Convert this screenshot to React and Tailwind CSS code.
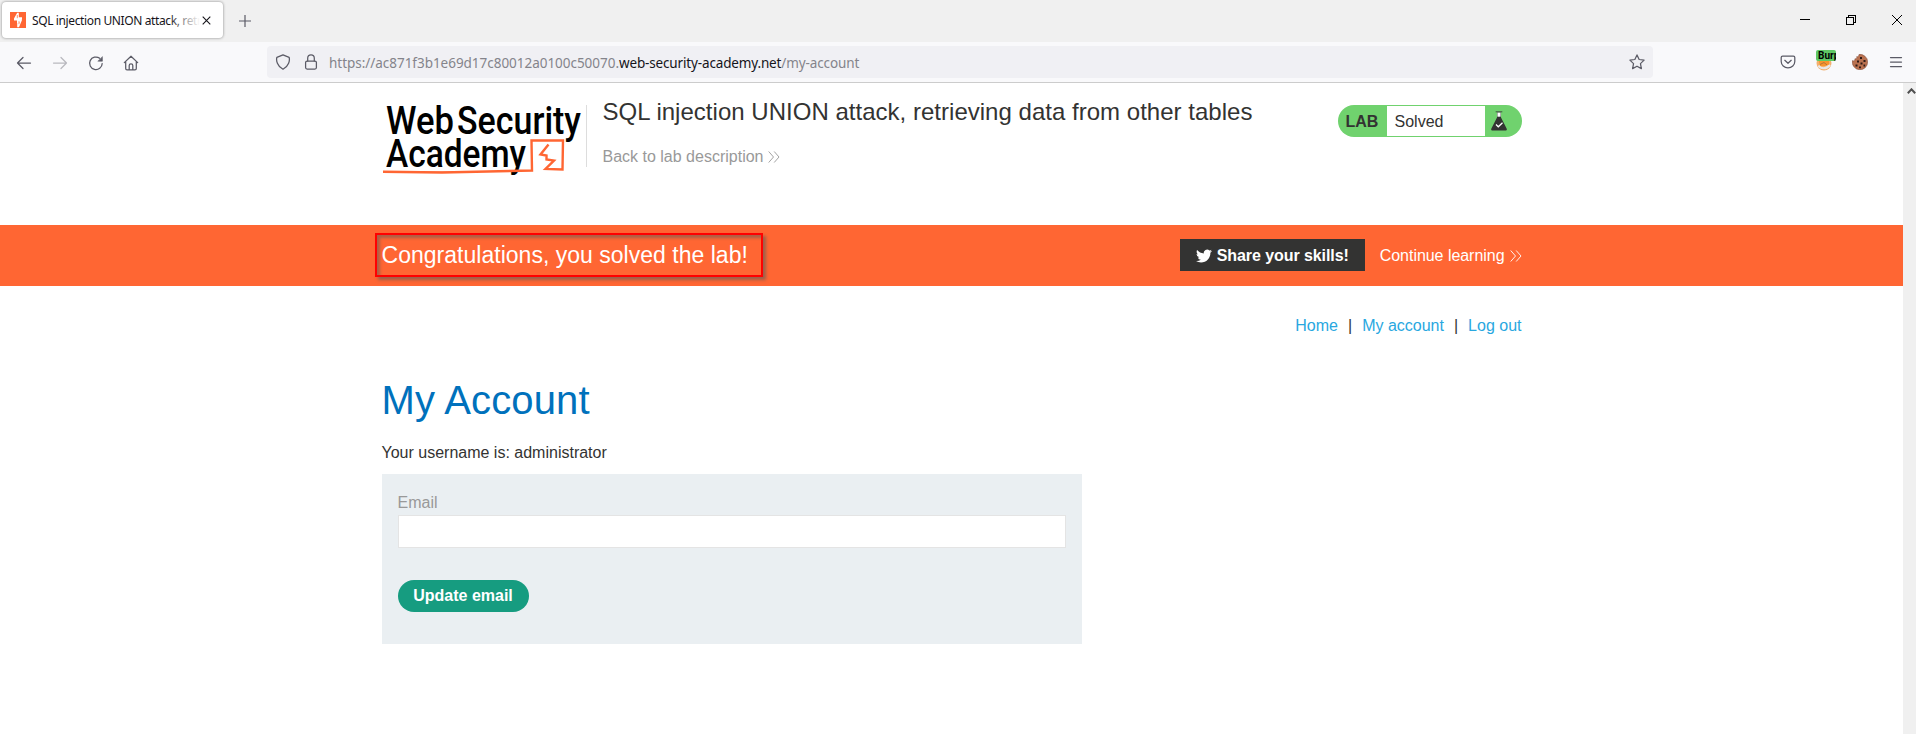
import React from "react";

const icon = { fill: "none", stroke: "#5b5b66", strokeWidth: 1.25, strokeLinecap: "round", strokeLinejoin: "round" };

function TabStrip() {
  return (
    <div className="flex h-[42px] items-center bg-[#f0f0f0]">
      <div className="mb-[2px] ml-[2px] flex h-[36px] w-[221px] items-center rounded bg-white pl-2 shadow-[0_0_3px_rgba(0,0,0,0.45)]">
        <svg width="16" height="16" viewBox="0 0 16 16" className="shrink-0">
          <rect width="16" height="16" fill="#ff6633" />
          <path d="M8.800 .8V5.200H12V7.200L9.200 11H7V8.600H4V6.600L7.200 .8z" fill="#fff" />
          <path d="M7.200 15.200V11H9.500V9L12 7.200 11.800 8.500 9 15.200z" fill="#fff" />
          <path d="M7.300 3v3.200M9 9.200v3" stroke="#ff6633" strokeWidth=".7" />
        </svg>
        <div className="relative ml-[6px] mt-[2px] w-[168px] overflow-hidden whitespace-nowrap font-['Noto_Sans',sans-serif] text-[12px] leading-[18px] tracking-[-0.38px] text-[#15141a]">
          SQL injection UNION attack, retrieving data
          <div className="absolute inset-y-0 right-0 w-8 bg-gradient-to-r from-transparent to-white" />
        </div>
        <svg width="9" height="9" viewBox="0 0 9 9" className="ml-[2px] shrink-0" stroke="#15141a" strokeWidth="1.1">
          <path d="M.7.7l7.6 7.6M8.3.7L.7 8.3" />
        </svg>
      </div>
      <svg width="12" height="12" viewBox="0 0 12 12" className="ml-[16px]" stroke="#5b5b66" strokeWidth="1.2">
        <path d="M6 0v12M0 6h12" />
      </svg>
      <div className="ml-auto mb-[2px] mr-[14px] flex items-center gap-9">
        <svg width="10" height="10" viewBox="0 0 10 10" shapeRendering="crispEdges"><path d="M0 4.5h10" stroke="#000" /></svg>
        <svg width="10" height="10" viewBox="0 0 10 10" fill="none" stroke="#000" shapeRendering="crispEdges">
          <path d="M.5 2.5h7v7h-7z M2.5 2.5v-2h7v7h-2" />
        </svg>
        <svg width="10" height="10" viewBox="0 0 10 10" stroke="#000"><path d="M0 0l10 10M10 0L0 10" /></svg>
      </div>
    </div>
  );
}

function Toolbar() {
  return (
    <div className="flex h-[41px] items-center border-b border-[#cccccc] bg-[#f9f9fb]">
      <div className="flex w-[267px] items-center gap-5 pl-4 pt-px">
        <svg width="16" height="16" viewBox="0 0 16 16" {...icon}><path d="M14.5 8h-13M7 2.5L1.5 8 7 13.5" /></svg>
        <svg width="16" height="16" viewBox="0 0 16 16" {...icon} stroke="#b9b9bf"><path d="M1.5 8h13M9 2.5L14.500 8 9 13.500" /></svg>
        <svg width="16" height="16" viewBox="0 0 16 16" {...icon}>
          <path d="M14.200 8.500A6.300 6.300 0 1 1 11.700 3.300" /><path d="M14.400 2v4.200h-4.200z" fill="#5b5b66" strokeWidth=".6" />
        </svg>
        <svg width="16" height="16" viewBox="0 0 16 16" className="-ml-px" {...icon}>
          <path d="M1.300 7.600L8 1.200l6.700 6.400M2.700 6.600v6.900c0 .8.500 1.300 1.300 1.300h8c.8 0 1.300-.5 1.300-1.300V6.600M6.200 14.600v-4a1.800 1.800 0 0 1 3.600 0v4" />
        </svg>
      </div>
      <div className="flex h-8 w-[1386px] items-center rounded bg-[#f0f0f4] pl-2">
        <svg width="16" height="16" viewBox="0 0 16 16" {...icon}>
          <path d="M8 .8L14.100 3.300c.9 2.800-.2 9-6.100 12C2.100 12.300 1 6.100 1.900 3.300z" />
        </svg>
        <svg width="16" height="16" viewBox="0 0 16 16" className="ml-3" {...icon}>
          <rect x="2.600" y="7" width="10.800" height="8" rx="1.500" /><path d="M4.700 7V4.200a3.300 3.300 0 0 1 6.600 0V7" />
        </svg>
        <div className="ml-[10px] mt-[2px] whitespace-nowrap font-['Noto_Sans',sans-serif] text-[13.5px] leading-5 tracking-[-0.03px] text-[#84848b]">
          https://ac871f3b1e69d17c80012a0100c50070.<span className="tracking-[-0.15px] text-[#15141a]">web-security-academy.net</span><span className="tracking-[-0.1px]">/my-account</span>
        </div>
        <svg width="16" height="16" viewBox="0 0 16 16" className="ml-auto mr-2" {...icon}>
          <path d="M8 .9l2.150 4.600 4.950.6-3.650 3.500.95 5L8 12.200l-4.400 2.400.95-5L.9 6.100l4.950-.6z" />
        </svg>
      </div>
      <div className="ml-auto mr-3 flex items-center gap-5">
        <svg width="16" height="16" viewBox="0 0 16 16" {...icon}>
          <path d="M2.600 2h10.800c.9 0 1.400.6 1.400 1.400v4.200a6.800 6.300 0 0 1-13.600 0V3.400C1.200 2.600 1.700 2 2.600 2z M4.800 6.300L8 9.300l3.200-3" />
        </svg>
        <div className="relative h-5 w-4">
          <svg width="16" height="16" viewBox="0 0 16 16" className="absolute left-0 top-[3px]">
            <circle cx="8" cy="8" r="7.500" fill="#f3b06e" />
            <path d="M2.500 10.500c2 3.500 8 4 11.500-.5" stroke="#e8e8ea" strokeWidth="2.200" fill="none" />
            <path d="M2.500 5h10.500v4.500l-4 1.500H4z" fill="#f8942d" />
            <path d="M4 9.500l4-2 3 2.500" stroke="#a8703a" strokeWidth=".9" fill="none" />
          </svg>
          <div className="absolute left-0 -top-[2px] h-[11px] w-5 overflow-hidden rounded-[2px] bg-[#5fc965] pl-[2px] font-['Roboto',sans-serif] text-[10px] font-bold leading-[11px] text-black">Burp</div>
        </div>
        <svg width="16" height="16" viewBox="0 0 16 16">
          <path d="M7 .4a7.700 7.700 0 1 1-6.600 6.200c1.600.8 2.700-.2 2.500-1.800 1.800.2 2.300-.8 1.700-2.100C6 2.800 6.900 2 7 .4z" fill="#b9714f" stroke="#7b4432" strokeWidth=".5" />
          <path d="M8 3h2v2H8zM11.500 6h2v2h-2zM5 6.500h2v2H5zM8.500 8.500h2v2h-2zM3.500 10.500h2v2h-2zM7 12.500h2v1.700H7zM11.500 10.500h1.700v2h-1.700z" fill="#2f1a16" />
        </svg>
        <svg width="16" height="16" viewBox="0 0 16 16" {...icon}><path d="M2.500 3.500h11M2.500 8h11M2.500 12.500h11" /></svg>
      </div>
    </div>
  );
}

function Chevrons() {
  return (
    <svg width="12" height="12" viewBox="0 0 12 12" fill="none" stroke="currentColor" strokeWidth=".9" className="ml-[5px] inline-block">
      <path d="M.7.5L5.500 6 .7 11.500M6.200.5L11 6 6.200 11.500" />
    </svg>
  );
}

function Logo() {
  return (
    <svg width="204" height="80" viewBox="0 0 204 80" className="block shrink-0">
      <g fill="#000" fontFamily="Roboto, sans-serif" fontWeight="500" fontSize="38">
        <text x="4" y="34" textLength="68" lengthAdjust="spacingAndGlyphs">Web</text>
        <text x="75" y="34" textLength="124" lengthAdjust="spacingAndGlyphs">Security</text>
        <text x="4" y="66.500" textLength="140" lengthAdjust="spacingAndGlyphs">Academy</text>
      </g>
      <g fill="none" stroke="#ff6633" strokeWidth="2.400">
        <path d="M1 71.800L60 72.500 150 70.500 149.500 40.500 181 40.500 180.500 69.500 163.500 69 172 60.500 164.500 59.500V55.500L158.500 54.500 166.500 44.500" />
        <path d="M2 72.300L90 72" strokeWidth="1" />
      </g>
    </svg>
  );
}

function LabHeader() {
  return (
    <header className="mx-auto flex h-[142px] w-[1140px] pt-[17px]">
      <Logo />
      <div className="mt-[5px] h-[62px] w-px bg-[#dddddd]" />
      <div className="ml-[16px]">
        <h2 className="text-[24px] leading-[24px] tracking-[0.02px]">SQL injection UNION attack, retrieving data from other tables</h2>
        <a className="mt-[24px] flex items-center leading-[18px] text-[#999999]">Back to lab description<Chevrons /></a>
      </div>
      <div className="ml-auto mt-[5px] flex h-8 w-[184px] items-center rounded-full bg-[#70d26e] pl-2">
        <span className="w-[41px] pt-[2px] font-bold">LAB</span>
        <span className="flex h-[30px] w-[98px] items-center bg-white pl-[8px] pt-[2px]">Solved</span>
        <svg width="16" height="20" viewBox="0 0 16 20" className="ml-[6px]">
          <path d="M6 1.500v5L.4 17.500c-.6 1.300 0 2 1.200 2h12.800c1.200 0 1.800-.7 1.200-2L10 6.500v-5z" fill="#333332" />
          <path d="M6.400 1.500h3.200v4.200H6.400z" fill="#fff" /><path d="M4.700.8h6.600" stroke="#333332" strokeWidth=".8" />
          <path d="M5 13.500l2.300 2.300 4.200-4" fill="none" stroke="#fff" strokeWidth="1.300" />
        </svg>
      </div>
    </header>
  );
}

function Banner() {
  return (
    <section className="h-[61px] bg-[#ff6633] text-white">
      <div className="mx-auto flex h-full w-[1140px] items-center">
        <div className="-ml-[7px] -mt-[1px] flex h-[44px] w-[388px] items-center border-2 border-[#ff0000] pl-[5px] shadow-[3px_3px_3px_rgba(90,90,90,0.6),inset_3px_3px_3px_rgba(90,90,90,0.5)]">
          <h4 className="whitespace-nowrap text-[23px] leading-6 tracking-[0.02px]">Congratulations, you solved the lab!</h4>
        </div>
        <button className="-mt-px ml-auto flex h-8 w-[185px] items-center whitespace-nowrap bg-[#333332] pl-4 pt-px font-bold tracking-[-0.08px]">
          <svg width="16" height="16" viewBox="0 0 24 24" fill="#fff" className="mr-[5px]">
            <path d="M23.950 4.570a10 10 0 0 1-2.820.78 4.960 4.960 0 0 0 2.160-2.720c-.95.550-2 .960-3.130 1.180a4.920 4.920 0 0 0-8.380 4.480C7.690 8.100 4.070 6.130 1.640 3.160a4.820 4.820 0 0 0-.67 2.480c0 1.710.870 3.210 2.190 4.100a4.900 4.900 0 0 1-2.230-.620v.060a4.920 4.920 0 0 0 3.950 4.830 5 5 0 0 1-2.210.090 4.940 4.940 0 0 0 4.600 3.420A9.870 9.870 0 0 1 0 19.540a13.990 13.990 0 0 0 7.550 2.210c9.050 0 14-7.500 14-13.980 0-.210 0-.420-.020-.630A9.940 9.940 0 0 0 24 4.590z" />
          </svg>
          Share your skills!
        </button>
        <a className="ml-[15px] flex items-center tracking-[-0.04px]">Continue learning<Chevrons /></a>
      </div>
    </section>
  );
}

function Account() {
  return (
    <main className="mx-auto w-[1140px]">
      <nav className="flex justify-end pt-[31px] leading-[18px] text-[#29a7df]">
        <a>Home</a><span className="mx-[10px] text-[#333332]">|</span>
        <a>My account</a><span className="mx-[10px] text-[#333332]">|</span>
        <a>Log out</a>
      </nav>
      <h1 className="mt-[42px] text-[40px] leading-[46px] tracking-[0.15px] text-[#0071bc]">My Account</h1>
      <p className="mt-[21px] leading-[18px]">Your username is: administrator</p>
      <form className="mt-[12px] h-[170px] w-[700px] bg-[#eaeff2] px-4 pt-[20px]">
        <label className="block leading-[18px] text-[#999999]">Email</label>
        <input className="mt-[3px] block h-[33px] w-full border border-[#e4e4e4] bg-white px-2" />
        <button type="button" className="mt-8 flex h-8 w-[131px] items-center justify-center rounded-full bg-[#169c80] font-bold text-white">Update email</button>
      </form>
    </main>
  );
}

export default function App() {
  return (
    <div className="flex h-[734px] flex-col overflow-hidden bg-white">
      <TabStrip />
      <Toolbar />
      <div className="flex min-h-0 flex-1">
        <div className="w-[1903px] font-['Liberation_Sans',Arial,sans-serif] text-[16px] text-[#333332]">
          <LabHeader />
          <Banner />
          <Account />
        </div>
        <div className="flex w-[13px] justify-end bg-[#f0f0f0] pt-[5px]">
          <svg width="9" height="6" viewBox="0 0 9 6" fill="none" stroke="#505050" strokeWidth="2"><path d="M.8 5.200L4.500 1.300l3.700 3.900" /></svg>
        </div>
      </div>
    </div>
  );
}
